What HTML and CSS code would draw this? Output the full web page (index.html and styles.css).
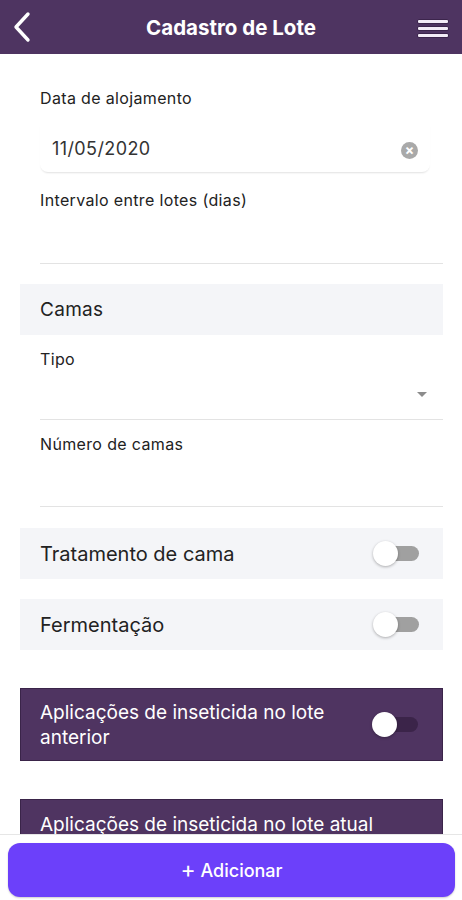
FILE: index.html
```html
<!DOCTYPE html>
<html lang="pt-BR">
<head>
  <meta charset="UTF-8">
  <title>Cadastro de Lote</title>
  <link rel="stylesheet" href="styles.css">
</head>
<body>
  <div class="app">
    <header class="topbar">
      <button class="icon-btn back" aria-label="Voltar">
        <svg width="22" height="32" viewBox="0 0 22 32"><path d="M16 3 L4 16 L16 29" fill="none" stroke="#fff" stroke-width="3.4" stroke-linecap="round" stroke-linejoin="round"/></svg>
      </button>
      <h1 class="title">Cadastro de Lote</h1>
      <button class="icon-btn menu" aria-label="Menu">
        <span></span><span></span><span></span>
      </button>
    </header>

    <main class="content">
      <div class="field first">
        <label class="label">Data de alojamento</label>
        <div class="date-input">
          <span class="date-value">11/05/2020</span>
          <span class="clear">×</span>
        </div>
      </div>

      <div class="field">
        <label class="label">Intervalo entre lotes (dias)</label>
        <div class="line-input"></div>
      </div>

      <div class="section">Camas</div>

      <div class="field tight">
        <label class="label">Tipo</label>
        <div class="line-input select">
          <span class="caret"></span>
        </div>
      </div>

      <div class="field tight">
        <label class="label">Número de camas</label>
        <div class="line-input tall"></div>
      </div>

      <div class="toggle-row">
        <span>Tratamento de cama</span>
        <span class="switch"></span>
      </div>

      <div class="toggle-row">
        <span>Fermentação</span>
        <span class="switch"></span>
      </div>

      <div class="toggle-row dark">
        <span class="row-text">Aplicações de inseticida no lote anterior</span>
        <span class="switch"></span>
      </div>

      <div class="toggle-row dark stacked">
        <span class="row-text">Aplicações de inseticida no lote atual</span>
        <span class="switch"></span>
      </div>
    </main>

    <footer class="footer">
      <button class="add-btn"><span class="plus">+</span> Adicionar</button>
    </footer>
  </div>
</body>
</html>
```

FILE: styles.css
```css
* {
  box-sizing: border-box;
}
body {
  margin: 0;
  font-family: Inter, 'Noto Sans', sans-serif;
  color: #222;
  background: #fff;
}
.app {
  height: 100vh;
  display: flex;
  flex-direction: column;
  overflow: hidden;
}
.topbar {
  height: 54px;
  flex: none;
  background: #4e3461;
  display: flex;
  align-items: center;
  justify-content: space-between;
  padding: 0 14px 0 8px;
}
.icon-btn {
  background: none;
  border: none;
  padding: 0;
  cursor: pointer;
}
.back {
  width: 30px;
  height: 32px;
  display: flex;
  align-items: center;
  justify-content: center;
}
.title {
  margin: 0;
  color: #fff;
  font-size: 20.5px;
  font-weight: 700;
  margin-left: 6px;
}
.menu {
  width: 30px;
  display: flex;
  flex-direction: column;
  gap: 4px;
  margin-top: 2px;
}
.menu span {
  display: block;
  height: 3px;
  background: #f3ecf7;
  border-radius: 1px;
  box-shadow: 0 0 0 0.5px #2a1738;
}

.content {
  flex: 1;
  overflow: hidden;
  padding: 0 19px 0 20px;
}
.field {
  padding-left: 20px;
  margin-top: 19px;
}
.field.first {
  margin-top: 35px;
}
.field.tight {
  margin-top: 15px;
}
.label {
  display: block;
  font-size: 16px;
  line-height: 18px;
  letter-spacing: 0.35px;
  color: #222;
}
.date-input {
  margin-top: 17px;
  margin-right: 13px;
  height: 48px;
  display: flex;
  align-items: center;
  justify-content: space-between;
  padding: 0 12px;
  border-radius: 0 0 8px 8px;
  box-shadow: 0 2px 2px -1px rgba(0, 0, 0, 0.12);
}
.date-value {
  font-size: 18px;
  letter-spacing: 0.4px;
  color: #333;
}
.clear {
  width: 17px;
  height: 17px;
  border-radius: 50%;
  background: #a9a9a9;
  color: #fff;
  font-size: 14px;
  line-height: 16px;
  text-align: center;
  font-weight: 700;
  margin-top: 4px;
}
.line-input {
  height: 55px;
  border-bottom: 1px solid #e3e3e3;
}
.line-input.select {
  height: 52px;
  display: flex;
  align-items: center;
  justify-content: flex-end;
  padding-right: 16px;
  padding-top: 2px;
}
.line-input.tall {
  height: 54px;
}
.caret {
  width: 0;
  height: 0;
  border-left: 5px solid transparent;
  border-right: 5px solid transparent;
  border-top: 5px solid #8c8c8c;
}
.section {
  margin-top: 20px;
  height: 51px;
  background: #f4f5f8;
  padding-left: 20px;
  display: flex;
  align-items: center;
  font-size: 19px;
  letter-spacing: 0.3px;
  color: #222;
}

.toggle-row {
  margin-top: 21px;
  min-height: 51px;
  background: #f4f5f8;
  display: flex;
  align-items: center;
  justify-content: space-between;
  padding: 0 24px 0 20px;
  font-size: 20px;
  color: #222;
}
.toggle-row + .toggle-row {
  margin-top: 20px;
}
.toggle-row.dark {
  margin-top: 38px;
  min-height: 73px;
  background: #4f3461;
  border: 1px solid #3a2449;
  padding-left: 19px;
  color: #fff;
  font-size: 19px;
  line-height: 25px;
}
.dark .row-text {
  max-width: 320px;
}
.toggle-row.stacked {
  flex-direction: column;
  align-items: flex-start;
  padding-top: 12px;
  padding-bottom: 20px;
}
.stacked .row-text {
  max-width: none;
  white-space: nowrap;
}
.stacked .switch {
  align-self: flex-end;
  margin-top: 12px;
}
.switch {
  position: relative;
  flex: none;
  width: 40px;
  height: 15px;
  border-radius: 8px;
  background: #a0a0a0;
  margin-left: 12px;
}
.switch::after {
  content: '';
  position: absolute;
  left: -6px;
  top: -5px;
  width: 25px;
  height: 25px;
  border-radius: 50%;
  background: #fff;
  box-shadow: 0 1px 3px rgba(0, 0, 0, 0.3);
}
.dark .switch {
  background: #3b2449;
}

.footer {
  flex: none;
  border-top: 1px solid #e6e6e6;
  padding: 8px 7px 3px 8px;
  background: #fff;
}
.add-btn {
  width: 100%;
  height: 54px;
  border: none;
  border-radius: 12px;
  background: #6c40fa;
  color: #fff;
  font-family: inherit;
  font-size: 18px;
  font-weight: 500;
  cursor: pointer;
  box-shadow: 0 1px 2px rgba(0, 0, 0, 0.2);
}
.plus {
  font-size: 23px;
  font-weight: 400;
  vertical-align: -1px;
}
```
